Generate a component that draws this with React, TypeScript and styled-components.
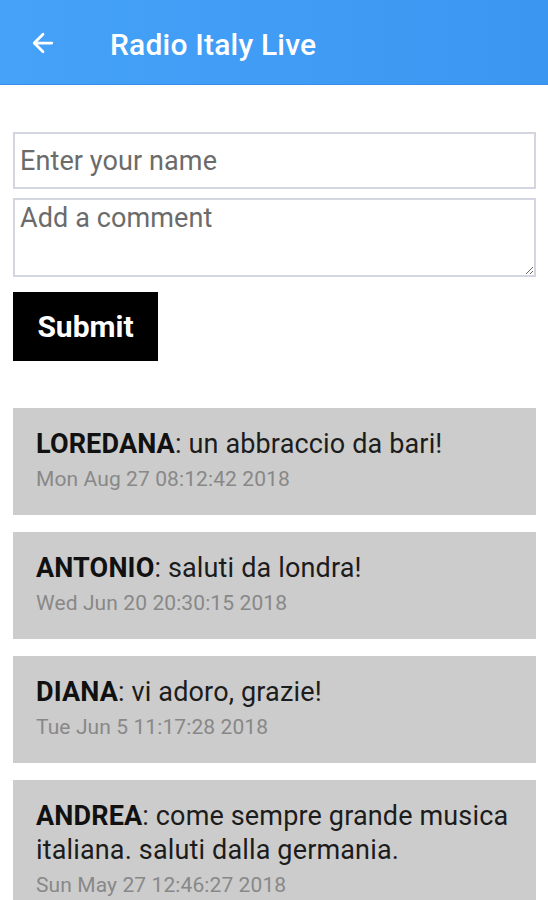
import styled, { createGlobalStyle } from 'styled-components';
import { ArrowLeft } from 'lucide-react';

const GlobalStyle = createGlobalStyle`
  body {
    margin: 0;
    background: #ffffff;
    font-family: Roboto, "Noto Sans", sans-serif;
  }
  * {
    box-sizing: border-box;
  }
`;

const Page = styled.div`
  width: 548px;
  min-height: 900px;
  overflow: hidden;
`;

const TopBar = styled.header`
  height: 85px;
  display: flex;
  align-items: center;
  padding: 4px 0 0 28px;
  background: linear-gradient(90deg, #45a2f8 0%, #3b96f1 100%);
  border-bottom: 1px solid #3a8de6;
  color: #ffffff;
`;

const BackButton = styled.button`
  display: flex;
  align-items: center;
  justify-content: center;
  padding: 0;
  border: none;
  background: none;
  color: #ffffff;
  width: 30px;
  height: 30px;
  margin: -2px 52px 0 0;
`;

const Title = styled.h1`
  margin: 0;
  font-size: 30px;
  font-weight: 500;
  letter-spacing: 0.2px;
`;

const Form = styled.form`
  display: flex;
  flex-direction: column;
  align-items: flex-start;
  padding: 47px 12px 0 13px;
`;

const NameInput = styled.input`
  width: 100%;
  height: 57px;
  margin: 0;
  padding: 0 5px;
  border: 2px solid #d3d6e0;
  font-family: Roboto, sans-serif;
  font-size: 27px;
  letter-spacing: 0.1px;
  color: #333;
  outline: none;

  &::placeholder {
    color: #6b6b6b;
  }
`;

const CommentInput = styled.textarea`
  width: 100%;
  height: 79px;
  margin: 9px 0 0;
  padding: 2px 5px;
  border: 2px solid #d3d6e0;
  font-family: Roboto, sans-serif;
  font-size: 27px;
  letter-spacing: 0.1px;
  color: #333;
  resize: vertical;
  outline: none;

  &::placeholder {
    color: #6b6b6b;
  }
`;

const SubmitButton = styled.button`
  margin-top: 15px;
  width: 145px;
  height: 69px;
  padding: 0;
  border: none;
  background: #000000;
  color: #ffffff;
  font-family: Roboto, sans-serif;
  font-size: 30px;
  font-weight: 700;
`;

const CommentList = styled.section`
  display: flex;
  flex-direction: column;
  gap: 17px;
  padding: 47px 12px 0 13px;
`;

const Card = styled.article`
  background: #cccccc;
  padding: 19px 23px 22px;
`;

const Message = styled.p`
  margin: 0;
  font-size: 27px;
  line-height: 34px;
  letter-spacing: 0.15px;
  color: #1c1c1c;
`;

const Author = styled.strong`
  font-weight: 700;
  color: #111;
`;

const Stamp = styled.div`
  margin-top: 4px;
  font-size: 21px;
  line-height: 28px;
  letter-spacing: 0.1px;
  color: #888888;
`;

const comments = [
  { name: 'LOREDANA', text: 'un abbraccio da bari!', date: 'Mon Aug 27 08:12:42 2018' },
  { name: 'ANTONIO', text: 'saluti da londra!', date: 'Wed Jun 20 20:30:15 2018' },
  { name: 'DIANA', text: 'vi adoro, grazie!', date: 'Tue Jun 5 11:17:28 2018' },
  {
    name: 'ANDREA',
    text: 'come sempre grande musica italiana. saluti dalla germania.',
    date: 'Sun May 27 12:46:27 2018',
  },
];

export default function App() {
  return (
    <Page>
      <GlobalStyle />
      <TopBar>
        <BackButton aria-label="Back">
          <ArrowLeft size={30} strokeWidth={2.2} />
        </BackButton>
        <Title>Radio Italy Live</Title>
      </TopBar>
      <Form onSubmit={(e) => e.preventDefault()}>
        <NameInput placeholder="Enter your name" />
        <CommentInput placeholder="Add a comment" />
        <SubmitButton type="submit">Submit</SubmitButton>
      </Form>
      <CommentList>
        {comments.map((c) => (
          <Card key={c.date}>
            <Message>
              <Author>{c.name}</Author>: {c.text}
            </Message>
            <Stamp>{c.date}</Stamp>
          </Card>
        ))}
      </CommentList>
    </Page>
  );
}
